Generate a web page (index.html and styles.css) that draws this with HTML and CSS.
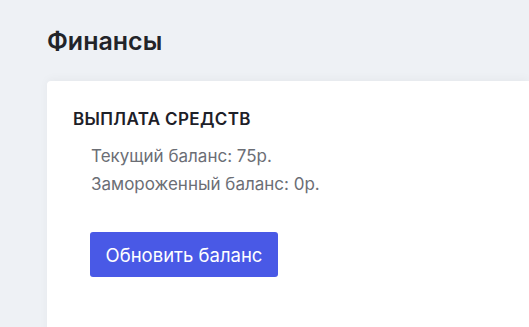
FILE: index.html
```html
<!DOCTYPE html>
<html lang="ru">
<head>
    <meta charset="UTF-8">
    <meta name="viewport" content="width=device-width, initial-scale=1.0">
    <title>Финансы</title>
    <link rel="stylesheet" href="styles.css">
</head>
<body>
    <div class="page">
        <h1 class="page-title">Финансы</h1>

        <div class="card">
            <h2 class="card-title">Выплата средств</h2>
            <div class="balance">
                <p>Текущий баланс: 75р.</p>
                <p>Замороженный баланс: 0р.</p>
            </div>
            <button class="btn-refresh">Обновить баланс</button>
        </div>
    </div>
</body>
</html>
```

FILE: styles.css
```css
body{
    font-family: Inter, "Noto Sans", sans-serif;
    margin: 0;
    padding: 0;
    background-color: #eef1f5;
    overflow: hidden;
}

.page{
    padding: 26px 0 0 47px;
}

.page-title{
    margin: 0 0 24px 0;
    font-size: 25px;
    font-weight: 600;
    color: #222429;
    line-height: 31px;
}

.card{
    background-color: #ffffff;
    border-radius: 4px 0 0 0;
    box-shadow: 0px -2px 10px rgba(0, 0, 0, 0.04);
    padding: 27px 26px 60px 26px;
    min-height: 200px;
}

.card-title{
    margin: 0;
    font-size: 17px;
    font-weight: 600;
    text-transform: uppercase;
    letter-spacing: 0.35px;
    color: #1d2028;
    line-height: 22px;
}

.balance{
    padding: 12px 0 0 18px;
}

.balance p{
    margin: 0;
    font-size: 17px;
    line-height: 28px;
    color: #6b6e75;
}

.btn-refresh{
    margin: 34px 0 0 17px;
    background-color: #4959e6;
    color: white;
    font-family: inherit;
    font-size: 18.5px;
    padding: 0;
    width: 188px;
    height: 45px;
    border: none;
    border-radius: 3px;
    cursor: pointer;
}
```
